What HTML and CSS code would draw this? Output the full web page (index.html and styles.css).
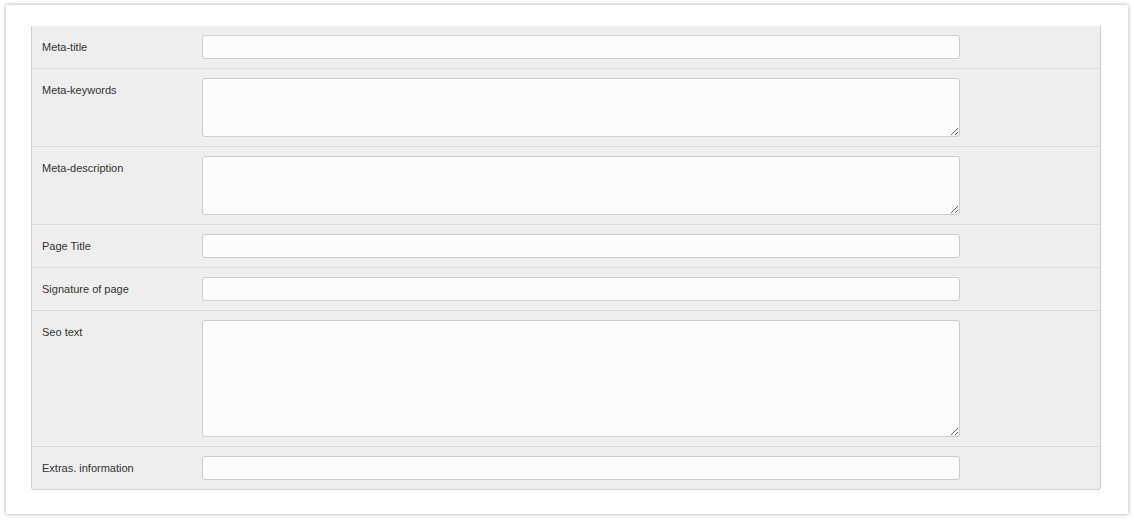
FILE: index.html
```html
<!DOCTYPE html>
<html>
<head>
<meta charset="utf-8">
<link rel="stylesheet" href="styles.css">
</head>
<body>
<div class="card">
  <div class="panel">
    <div class="row">
      <label class="label">Meta-title</label>
      <input class="field" type="text">
    </div>
    <div class="row">
      <label class="label">Meta-keywords</label>
      <textarea class="field area"></textarea>
    </div>
    <div class="row">
      <label class="label">Meta-description</label>
      <textarea class="field area"></textarea>
    </div>
    <div class="row">
      <label class="label">Page Title</label>
      <input class="field" type="text">
    </div>
    <div class="row">
      <label class="label">Signature of page</label>
      <input class="field" type="text">
    </div>
    <div class="row">
      <label class="label">Seo text</label>
      <textarea class="field area big"></textarea>
    </div>
    <div class="row">
      <label class="label">Extras. information</label>
      <input class="field" type="text">
    </div>
  </div>
</div>
</body>
</html>
```
FILE: styles.css
```css
html, body {
  margin: 0;
  padding: 0;
  background: #fff;
}
body {
  padding: 5px 6px;
  font-family: "Liberation Sans", Arial, sans-serif;
}
.card {
  width: 1122px;
  height: 509px;
  box-sizing: border-box;
  background: #fff;
  box-shadow: 0 0 4px rgba(0, 0, 0, 0.35);
  padding: 21px 27px 0 25px;
}
.panel {
  background: #eeeeee;
  border: 1px solid #d0d0d0;
  border-top: none;
  border-radius: 0 0 3px 3px;
}
.row {
  display: flex;
  align-items: flex-start;
  padding: 9px 10px;
  border-bottom: 1px solid #dcdcdc;
}
.row:last-child {
  border-bottom: none;
}
.label {
  width: 160px;
  flex: none;
  font-size: 11px;
  line-height: 24px;
  color: #333;
}
.field {
  display: block;
  width: 758px;
  height: 24px;
  box-sizing: border-box;
  margin: 0;
  background: #fcfcfc;
  border: 1px solid #cccccc;
  border-radius: 3px;
  font-family: "Liberation Sans", Arial, sans-serif;
  font-size: 12px;
  padding: 2px 6px;
  outline: none;
}
.area {
  height: 59px;
  resize: vertical;
}
.big {
  height: 117px;
}
```
